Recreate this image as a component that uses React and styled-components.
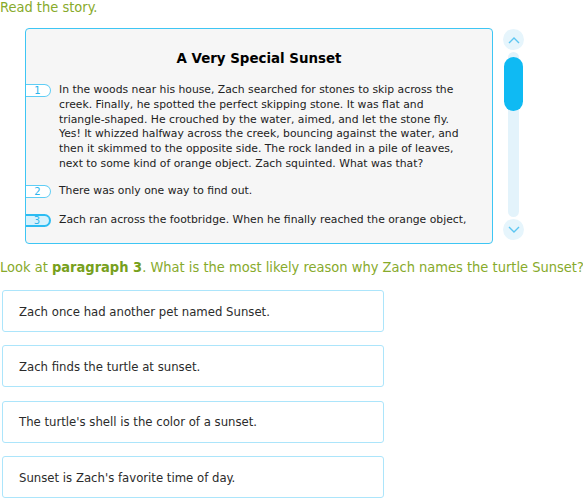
import React from "react";
import styled, { createGlobalStyle, css } from "styled-components";

const Global = createGlobalStyle`
  html, body { margin: 0; padding: 0; background: #fff; }
  body { font-family: "DejaVu Sans Condensed", "DejaVu Sans", sans-serif; }
`;

const Page = styled.div`
  width: 583px;
  display: flex;
  flex-direction: column;
`;

const Prompt = styled.div`
  color: #87aa2b;
  font-size: 14.5px;
  line-height: 15px;
  white-space: nowrap;
  b { font-weight: bold; color: #77a01c; }
`;

const StoryRow = styled.div`
  display: flex;
  align-items: flex-start;
  gap: 10px;
  margin: 13px 0 0 25px;
`;

const StoryBox = styled.div`
  width: 468px;
  height: 216px;
  box-sizing: border-box;
  border: 1px solid #3ec6f4;
  border-radius: 4px;
  background: #f6f6f6;
  padding: 22px 0 0 0;
`;

const Viewport = styled.div`
  height: 182px;
  overflow: hidden;
`;

const Title = styled.h1`
  margin: 0 0 16px 0;
  text-align: center;
  font-family: "DejaVu Sans", sans-serif;
  font-size: 13.4px;
  line-height: 16px;
  font-weight: bold;
  color: #000;
`;

const Para = styled.p`
  position: relative;
  margin: 0 0 ${(p) => p.$gap || 12}px 0;
  padding: 0 23px 0 33px;
  font-family: "DejaVu Sans", sans-serif;
  font-size: 10.8px;
  line-height: 14.8px;
  color: #222;
`;

const Badge = styled.span`
  position: absolute;
  left: -1px;
  top: 1px;
  width: 26px;
  height: 13px;
  box-sizing: border-box;
  border: 1px solid #5fcdf5;
  border-left: none;
  border-radius: 0 8px 8px 0;
  background: #fff;
  color: #2bb5ee;
  font-size: 10px;
  line-height: 12px;
  text-align: center;
  ${(p) =>
    p.$active &&
    css`
      border: 2px solid #2cbcf2;
      border-left: none;
      background: #d6f2fd;
      line-height: 10px;
    `}
`;

const Scroll = styled.div`
  width: 21px;
  display: flex;
  flex-direction: column;
  align-items: center;
  margin-top: 1px;
`;

const Arrow = styled.div`
  width: 21px;
  height: 21px;
  border-radius: 50%;
  background: #e6f5fc;
  display: flex;
  align-items: center;
  justify-content: center;
`;

const Track = styled.div`
  position: relative;
  width: 11px;
  height: 165px;
  margin: 2px 0;
  border-radius: 6px;
  background: #e3f3fb;
`;

const Thumb = styled.div`
  position: absolute;
  left: -4px;
  top: 5px;
  width: 19px;
  height: 54px;
  border-radius: 10px;
  background: #0fbaf3;
`;

const Question = styled(Prompt)`
  margin-top: 16px;
`;

const Answers = styled.div`
  display: flex;
  flex-direction: column;
  gap: 13.4px;
  margin: 15px 0 0 2px;
`;

const Answer = styled.div`
  width: 382px;
  height: 42px;
  box-sizing: border-box;
  border: 1px solid #ace5fb;
  border-radius: 3px;
  display: flex;
  align-items: center;
  padding-left: 16px;
  font-size: 13px;
  color: #2b2b2b;
  background: #fff;
`;

const Chevron = ({ up }) => (
  <svg width="12" height="8" viewBox="0 0 12 8">
    <path
      d={up ? "M1 7 L6 2 L11 7" : "M1 1 L6 6 L11 1"}
      fill="none"
      stroke="#5cc6f2"
      strokeWidth="1.4"
    />
  </svg>
);

const paragraphs = [
  "In the woods near his house, Zach searched for stones to skip across the creek. Finally, he spotted the perfect skipping stone. It was flat and triangle-shaped. He crouched by the water, aimed, and let the stone fly. Yes! It whizzed halfway across the creek, bouncing against the water, and then it skimmed to the opposite side. The rock landed in a pile of leaves, next to some kind of orange object. Zach squinted. What was that?",
  "There was only one way to find out.",
  "Zach ran across the footbridge. When he finally reached the orange object,",
];

const answers = [
  "Zach once had another pet named Sunset.",
  "Zach finds the turtle at sunset.",
  "The turtle's shell is the color of a sunset.",
  "Sunset is Zach's favorite time of day.",
];

export default function App() {
  return (
    <Page>
      <Global />
      <Prompt>Read the story.</Prompt>
      <StoryRow>
        <StoryBox>
          <Viewport>
            <Title>A Very Special Sunset</Title>
            {paragraphs.map((t, i) => (
              <Para key={i} $gap={i === 1 ? 14 : 12}>
                <Badge $active={i === 2}>{i + 1}</Badge>
                {t}
              </Para>
            ))}
          </Viewport>
        </StoryBox>
        <Scroll>
          <Arrow>
            <Chevron up />
          </Arrow>
          <Track>
            <Thumb />
          </Track>
          <Arrow>
            <Chevron />
          </Arrow>
        </Scroll>
      </StoryRow>
      <Question>
        Look at <b>paragraph 3</b>. What is the most likely reason why Zach names the turtle Sunset?
      </Question>
      <Answers>
        {answers.map((a) => (
          <Answer key={a}>{a}</Answer>
        ))}
      </Answers>
    </Page>
  );
}
